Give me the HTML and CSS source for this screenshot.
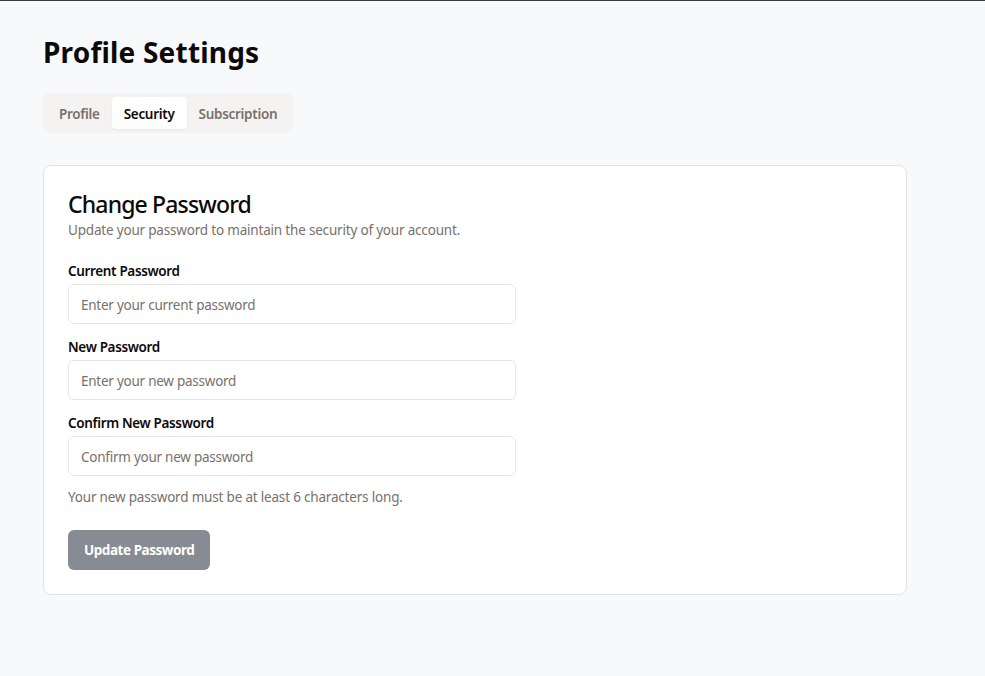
FILE: index.html
```html
<!DOCTYPE html>
<html lang="en">
<head>
<meta charset="utf-8">
<title>Profile Settings</title>
<link rel="stylesheet" href="styles.css">
</head>
<body>
<main class="page">
  <h1 class="page-title">Profile Settings</h1>
  <nav class="tabs">
    <button class="tab">Profile</button>
    <button class="tab tab-active">Security</button>
    <button class="tab">Subscription</button>
  </nav>
  <section class="card">
    <h2 class="card-title">Change Password</h2>
    <p class="card-desc">Update your password to maintain the security of your account.</p>
    <form class="form">
      <div class="field">
        <label class="label" for="cur">Current Password</label>
        <input class="input" id="cur" type="password" placeholder="Enter your current password">
      </div>
      <div class="field">
        <label class="label" for="new">New Password</label>
        <input class="input" id="new" type="password" placeholder="Enter your new password">
      </div>
      <div class="field">
        <label class="label" for="conf">Confirm New Password</label>
        <input class="input" id="conf" type="password" placeholder="Confirm your new password">
      </div>
      <p class="hint">Your new password must be at least 6 characters long.</p>
      <button class="btn" type="button">Update Password</button>
    </form>
  </section>
</main>
</body>
</html>
```
FILE: styles.css
```css
* { box-sizing: border-box; }
html, body { margin: 0; height: 100%; }
body {
  background: #f8f9fb;
  border-top: 1px solid #3a3a3a;
  font-family: "Noto Sans", "Open Sans", sans-serif;
  color: #0c0a09;
}
.page {
  width: 864px;
  margin-left: 43px;
  padding-top: 31px;
}
.page-title {
  margin: 0;
  font-size: 28px;
  line-height: 40px;
  font-weight: 700;
  letter-spacing: 0.2px;
}
.tabs {
  display: inline-flex;
  margin-top: 21px;
  padding: 4px;
  background: #f4f3f1;
  border-radius: 6px;
}
.tab {
  border: 0;
  background: transparent;
  font-family: inherit;
  font-size: 13.5px;
  font-weight: 600;
  letter-spacing: -0.3px;
  color: #78716c;
  height: 32px;
  padding: 1px 12px 0;
  border-radius: 4px;
}
.tab-active {
  background: #fff;
  color: #0c0a09;
  box-shadow: 0 1px 2px rgba(0,0,0,0.05);
}
.card {
  margin-top: 32px;
  background: #fff;
  border: 1px solid #e3e3e3;
  border-radius: 8px;
  padding: 24px;
}
.card-title {
  margin: 0;
  font-size: 23px;
  line-height: 28px;
  font-weight: 500;
  letter-spacing: -0.85px;
}
.card-desc {
  margin: 2px 0 0;
  font-size: 13.5px;
  line-height: 20px;
  letter-spacing: -0.19px;
  color: #78716c;
}
.form {
  display: flex;
  flex-direction: column;
  margin-top: 22px;
}
.field {
  display: flex;
  flex-direction: column;
  gap: 4px;
  margin-bottom: 14px;
  width: 448px;
}
.label {
  font-size: 13.5px;
  line-height: 18px;
  font-weight: 600;
  letter-spacing: -0.35px;
}
.input {
  height: 40px;
  border: 1px solid #e5e5e5;
  border-radius: 6px;
  padding: 1px 12px 0;
  font-family: inherit;
  font-size: 13.5px;
  letter-spacing: -0.25px;
  color: #0c0a09;
  background: #fff;
  outline: none;
}
.input::placeholder { color: #78716c; }
.hint {
  margin: -3px 0 0;
  font-size: 13.5px;
  line-height: 20px;
  letter-spacing: -0.19px;
  color: #78716c;
}
.btn {
  align-self: flex-start;
  margin-top: 23px;
  height: 40px;
  padding: 0 16px;
  border: 0;
  border-radius: 6px;
  background: #878b93;
  color: #fff;
  font-family: inherit;
  font-size: 13.5px;
  font-weight: 700;
  letter-spacing: -0.45px;
}
```
